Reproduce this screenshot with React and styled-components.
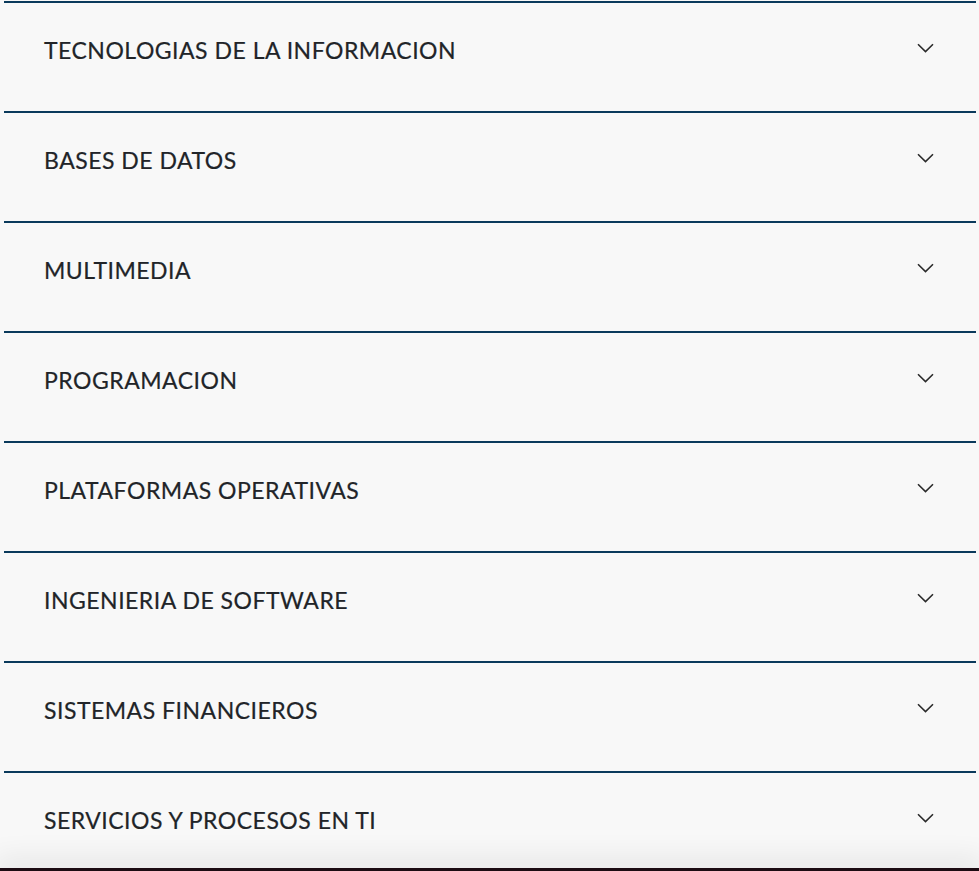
import React from "react";
import styled, { createGlobalStyle } from "styled-components";

const GlobalStyle = createGlobalStyle`
  html, body {
    margin: 0;
    padding: 0;
    background: #f8f8f8;
  }
  body {
    font-family: Lato, "Open Sans", Arial, sans-serif;
    color: #232629;
  }
`;

const Page = styled.div`
  background: #f8f8f8;
  min-height: 100vh;
  padding-bottom: 40px;
`;

const List = styled.div`
  margin: 0 3px 0 4px;
  padding-top: 1px;
`;

const Item = styled.div`
  border-top: 2px solid #0a3a5c;
`;

const Header = styled.button`
  all: unset;
  box-sizing: border-box;
  width: 100%;
  height: 108px;
  display: flex;
  align-items: flex-start;
  justify-content: space-between;
  padding: 34px 42px 0 40px;
  cursor: pointer;
`;

const Title = styled.span`
  font-family: Lato, "Open Sans", Arial, sans-serif;
  font-size: 23px;
  line-height: 26px;
  font-weight: 400;
  letter-spacing: 0.5px;
  color: #212428;
  -webkit-text-stroke: 0.2px #212428;
  text-transform: uppercase;
`;

const Chevron = styled.svg`
  width: 17px;
  height: 10px;
  margin-top: 6px;
  flex: none;
`;

const BottomBar = styled.div`
  position: fixed;
  left: 0;
  right: 0;
  bottom: 0;
  height: 3px;
  background: #1c0b12;
  box-shadow: 0 0 30px 6px rgba(0, 0, 0, 0.12);
`;

const sections = [
  "TECNOLOGIAS DE LA INFORMACION",
  "BASES DE DATOS",
  "MULTIMEDIA",
  "PROGRAMACION",
  "PLATAFORMAS OPERATIVAS",
  "INGENIERIA DE SOFTWARE",
  "SISTEMAS FINANCIEROS",
  "SERVICIOS Y PROCESOS EN TI",
];

export default function App() {
  return (
    <>
      <GlobalStyle />
      <Page>
        <List>
          {sections.map((name) => (
            <Item key={name}>
              <Header type="button">
                <Title>{name}</Title>
                <Chevron viewBox="0 0 17 10" fill="none">
                  <path
                    d="M1 1.2 L8.5 8.6 L16 1.2"
                    stroke="#2b2b2b"
                    strokeWidth="1.6"
                  />
                </Chevron>
              </Header>
            </Item>
          ))}
        </List>
      </Page>
      <BottomBar />
    </>
  );
}
